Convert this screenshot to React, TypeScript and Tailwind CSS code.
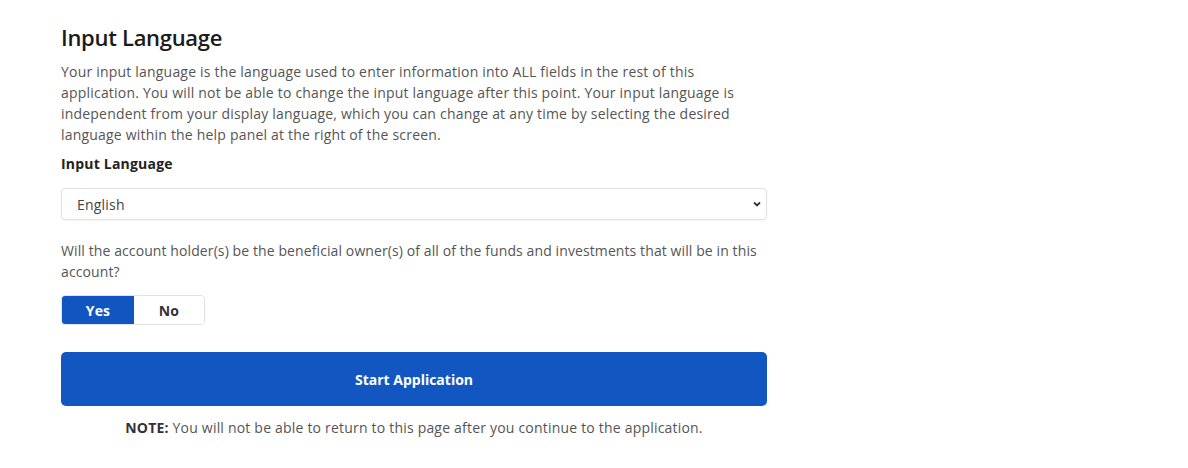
import React from "react";

export default function App() {
  return (
    <div className="w-[1188px] h-[468px] bg-white tracking-[0.2px]" style={{ fontFamily: "'Open Sans', Lato, sans-serif" }}>
      <div className="ml-[61px] w-[706px] pt-[23px]">
        <h1 className="text-[22px] leading-[28px] font-semibold text-[#1b1b1b] tracking-[-0.3px]">Input Language</h1>
        <p className="mt-[10px] text-[14px] leading-[21px] text-[#555555] pr-[10px]">
          Your input language is the language used to enter information into ALL fields in the rest of this application. You will not be able to change the input language after this point. Your input language is independent from your display language, which you can change at any time by selecting the desired language within the help panel at the right of the screen.
        </p>
        <div className="mt-[9px] text-[14px] leading-[20px] font-bold text-[#222222]">Input Language</div>
        <div className="mt-[14px] h-[32px] border border-[#e2e2e2] rounded-[4px] flex items-center justify-between pl-[15px] pr-[4px] text-[14px] text-[#444444] shadow-[0_1px_2px_rgba(0,0,0,0.05)]">
          <span>English</span>
          <svg width="10" height="10" viewBox="0 0 10 10">
            <path d="M2 3.5 L5 6.5 L8 3.5" fill="none" stroke="#333" strokeWidth="1.8" />
          </svg>
        </div>
        <p className="mt-[20px] text-[14px] leading-[21px] text-[#555555] tracking-[0.1px]">
          Will the account holder(s) be the beneficial owner(s) of all of the funds and investments that will be in this account?
        </p>
        <div className="mt-[13px] flex w-[144px] h-[30px] rounded-[4px] border border-[#e2e2e2] overflow-hidden text-[14px] font-bold">
          <div className="w-[72px] bg-[#1155c0] text-white flex items-center justify-center">Yes</div>
          <div className="flex-1 bg-white text-[#333333] flex items-center justify-center">No</div>
        </div>
        <div className="mt-[27px] h-[54px] rounded-[5px] bg-[#1256c1] flex items-center justify-center text-white text-[14px] font-bold tracking-normal">
          Start Application
        </div>
        <div className="mt-[12px] text-center text-[14px] leading-[20px] text-[#555555]">
          <span className="font-bold text-[#333333]">NOTE:</span> You will not be able to return to this page after you continue to the application.
        </div>
      </div>
    </div>
  );
}
